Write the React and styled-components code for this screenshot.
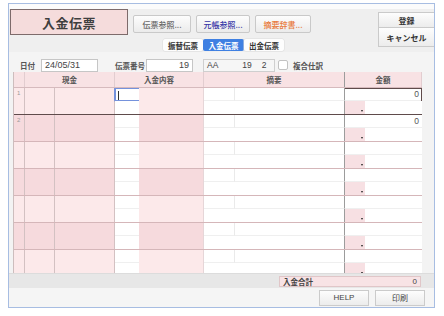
import React from "react";
import styled, { createGlobalStyle } from "styled-components";

const GlobalStyle = createGlobalStyle`
  html, body {
    margin: 0;
    background: #ffffff;
  }
  body {
    font-family: "Liberation Sans", "Noto Sans CJK JP", sans-serif;
    color: #444;
  }
`;

const COLS = "11px 30px 60px 24px 65px 31px 110px 20px 57px";

const Window = styled.div`
  box-sizing: border-box;
  width: 427px;
  height: 305px;
  margin: 3px 0 0 8px;
  border: 1px solid #a7bde2;
  background: #f3f3f3;
  display: flex;
  flex-direction: column;
  overflow: hidden;
`;

const TopStrip = styled.div`
  height: 5px;
  background: #fbfbfb;
`;

const Header = styled.div`
  height: 43px;
  display: flex;
  align-items: flex-start;
  background: #efefef;
`;

const HeaderLeft = styled.div`
  display: flex;
  flex-direction: column;
`;

const TopRow = styled.div`
  display: flex;
  align-items: flex-start;
  padding-left: 1px;
`;

const TitleBox = styled.div`
  box-sizing: border-box;
  width: 118px;
  height: 26px;
  background: #f5dcdc;
  border: 1px solid #7d6b6b;
  display: flex;
  align-items: center;
  justify-content: center;
  font-family: "Noto Sans CJK JP", sans-serif;
  font-weight: 700;
  font-size: 13px;
  color: #3f3f3f;
  letter-spacing: 0.5px;
`;

const ButtonGroup = styled.div`
  display: flex;
  gap: 5px;
  margin: 6px 0 0 5px;
`;

const ToolButton = styled.div`
  box-sizing: border-box;
  width: ${(p) => p.$w}px;
  height: 18px;
  border: 1px solid #c9c9c9;
  border-radius: 2px;
  background: linear-gradient(#fdfdfd, #ebebeb);
  display: flex;
  align-items: center;
  justify-content: center;
  font-family: "Noto Sans CJK JP", sans-serif;
  font-size: 8px;
  font-weight: 500;
  color: ${(p) => p.$color};
`;

const TabsRow = styled.div`
  display: flex;
  margin: 4px 0 0 154px;
`;

const Tab = styled.div`
  box-sizing: border-box;
  width: ${(p) => p.$w}px;
  height: 12px;
  display: flex;
  align-items: center;
  justify-content: center;
  font-family: "Noto Sans CJK JP", sans-serif;
  font-weight: 700;
  font-size: 7.5px;
  background: ${(p) => (p.$active ? "#3f80e2" : "#fdfdfd")};
  color: ${(p) => (p.$active ? "#ffffff" : "#333")};
  border-radius: 2px;
  box-shadow: ${(p) => (p.$active ? "none" : "0 0 0 0.5px #dcdcdc")};
`;

const SideButtons = styled.div`
  margin: 3px 0 0 auto;
  display: flex;
  flex-direction: column;
`;

const SideButton = styled.div`
  box-sizing: border-box;
  width: 56px;
  height: ${(p) => p.$h}px;
  border: 1px solid #cacaca;
  border-right: none;
  background: linear-gradient(#fdfdfd, #ececec);
  display: flex;
  align-items: center;
  justify-content: center;
  font-family: "Noto Sans CJK JP", sans-serif;
  font-weight: 700;
  font-size: 8px;
  color: #333;
  & + & {
    border-top: none;
  }
`;

const InfoRow = styled.div`
  box-sizing: border-box;
  height: 20px;
  padding: 6px 0 0 11px;
  display: flex;
  align-items: center;
  background: #f4f4f4;
`;

const Label = styled.span`
  font-family: "Noto Sans CJK JP", sans-serif;
  font-size: 7.5px;
  font-weight: 700;
  color: #555;
  margin-left: ${(p) => p.$ml || 0}px;
`;

const Field = styled.div`
  box-sizing: border-box;
  width: ${(p) => p.$w}px;
  height: 13px;
  margin-left: ${(p) => p.$ml || 0}px;
  background: #ffffff;
  border: 1px solid #c6c6c6;
  display: flex;
  align-items: center;
  justify-content: ${(p) => (p.$right ? "flex-end" : "flex-start")};
  padding: 0 3px;
  font-size: 9px;
  color: #444;
`;

const CodeBox = styled.div`
  box-sizing: border-box;
  width: 72px;
  height: 13px;
  margin-left: 10px;
  border: 1px solid #cfcfcf;
  background: #f6f6f6;
  display: flex;
  align-items: center;
  padding-left: 3px;
  font-size: 8.5px;
  color: #444;
`;

const CodePart = styled.span`
  margin-left: ${(p) => p.$ml}px;
`;

const CheckBox = styled.div`
  box-sizing: border-box;
  width: 10px;
  height: 10px;
  margin-left: 3px;
  background: #fff;
  border: 1px solid #c2c2c2;
  border-radius: 2px;
`;

const GridFrame = styled.div`
  box-sizing: border-box;
  width: 409px;
  margin-left: 4px;
  border-left: 1px solid #cdbdbd;
  background: #fff;
`;

const HeadRow = styled.div`
  display: grid;
  grid-template-columns: ${COLS};
  height: 16px;
  box-sizing: border-box;
  background: #f8e2e4;
  border-bottom: 1px solid #d6babd;
`;

const HeadCell = styled.div`
  grid-column: span ${(p) => p.$span};
  display: flex;
  align-items: center;
  justify-content: center;
  font-family: "Noto Sans CJK JP", sans-serif;
  font-size: 7.5px;
  font-weight: 700;
  color: #555;
  border-right: 1px solid ${(p) => (p.$dark ? "#9c9c9c" : "#e2cdd0")};
`;

const Body = styled.div`
  height: 185px;
  overflow: hidden;
`;

const Row = styled.div`
  position: relative;
  box-sizing: border-box;
  height: 27px;
  display: grid;
  grid-template-columns: ${COLS};
  grid-template-rows: 13px 13px;
  border-bottom: 1px solid #d5b6b9;
  --pink: ${(p) => (p.$even ? "#f6dadd" : "#fce9ea")};
  outline: ${(p) => (p.$selected ? "1px solid #5f4b4b" : "none")};
  outline-offset: -1px;
`;

const PinkCell = styled.div`
  position: relative;
  grid-column: ${(p) => p.$col};
  grid-row: 1 / span 2;
  background: var(--pink);
  border-right: 1px solid ${(p) => p.$line || "#d3c1c2"};
`;

const RowNum = styled.span`
  position: absolute;
  top: 2px;
  left: 3px;
  font-size: 6px;
  color: #9a9a9a;
`;

const WhiteCell = styled.div`
  position: relative;
  box-sizing: border-box;
  grid-column: ${(p) => p.$col};
  grid-row: ${(p) => p.$row};
  background: #ffffff;
  border-bottom: ${(p) => (p.$row === 1 ? "1px solid #efefef" : "none")};
  border-right: ${(p) => (p.$line ? `1px solid ${p.$line}` : "none")};
`;

const FocusBox = styled.div`
  position: absolute;
  top: -1px;
  left: -1px;
  right: -2px;
  bottom: -2px;
  border: 2px solid #7592dc;
  border-radius: 2px;
  background: #fff;
  &::after {
    content: "";
    position: absolute;
    left: 2px;
    top: 2px;
    width: 1px;
    height: 9px;
    background: #333;
  }
`;

const Amount = styled.div`
  grid-column: 8 / span 2;
  grid-row: 1;
  background: #fff;
  border-bottom: 1px solid #efefef;
  display: flex;
  align-items: center;
  justify-content: flex-end;
  padding-right: 3px;
  font-size: 8.5px;
  color: #555;
`;

const TaxCell = styled.div`
  position: relative;
  grid-column: 8;
  grid-row: 2;
  background: #f7e0e3;
  &::after {
    content: "";
    position: absolute;
    right: 2px;
    bottom: 2px;
    border-left: 1.5px solid transparent;
    border-right: 1.5px solid transparent;
    border-top: 2px solid #222;
  }
`;

const TotalBand = styled.div`
  box-sizing: border-box;
  height: 15px;
  display: flex;
  align-items: center;
  justify-content: flex-end;
  padding-right: 13px;
  background: #e7e7e7;
  border-top: 1px solid #dcdcdc;
`;

const TotalBox = styled.div`
  box-sizing: border-box;
  width: 142px;
  height: 11px;
  background: #f8e3e5;
  border: 1px solid #e0c6c8;
  display: flex;
  align-items: center;
  justify-content: space-between;
  padding: 0 3px;
  font-size: 8px;
  color: #444;
`;

const TotalLabel = styled.span`
  font-family: "Noto Sans CJK JP", sans-serif;
  font-weight: 700;
  font-size: 7.5px;
`;

const Footer = styled.div`
  height: 19px;
  display: flex;
  align-items: center;
  justify-content: flex-end;
  gap: 6px;
  padding-right: 9px;
  background: #f5f5f5;
`;

const FooterButton = styled.div`
  box-sizing: border-box;
  width: 50px;
  height: 16px;
  border: 1px solid #cbcbcb;
  background: linear-gradient(#fdfdfd, #ececec);
  display: flex;
  align-items: center;
  justify-content: center;
  font-family: "Liberation Sans", "Noto Sans CJK JP", sans-serif;
  font-size: 8px;
  color: #444;
`;

const rows = [1, 2, 3, 4, 5, 6, 7];

function EntryRow({ n }) {
  const even = n % 2 === 0;
  return (
    <Row $even={even} $selected={n === 1}>
      <PinkCell $col={1}>{n <= 2 && <RowNum>{n}</RowNum>}</PinkCell>
      <PinkCell $col={2} />
      <PinkCell $col={3} />
      <WhiteCell $col={4} $row={1}>
        {n === 1 && <FocusBox />}
      </WhiteCell>
      <WhiteCell $col={4} $row={2} />
      <PinkCell $col={5} $line="#e6d6d8" />
      <WhiteCell $col={6} $row={1} $line="#eaeaea" />
      <WhiteCell $col={7} $row={1} $line="#9c9c9c" />
      <WhiteCell $col="6 / span 2" $row={2} $line="#9c9c9c" />
      <Amount>{n <= 2 ? "0" : ""}</Amount>
      <TaxCell />
      <WhiteCell $col={9} $row={2} />
    </Row>
  );
}

export default function App() {
  return (
    <>
      <GlobalStyle />
      <Window>
        <TopStrip />
        <Header>
          <HeaderLeft>
            <TopRow>
              <TitleBox>入金伝票</TitleBox>
              <ButtonGroup>
                <ToolButton $w={58} $color="#666">伝票参照...</ToolButton>
                <ToolButton $w={54} $color="#3535a6">元帳参照...</ToolButton>
                <ToolButton $w={56} $color="#e8793a">摘要辞書...</ToolButton>
              </ButtonGroup>
            </TopRow>
            <TabsRow>
              <Tab $w={40}>振替伝票</Tab>
              <Tab $w={41} $active>入金伝票</Tab>
              <Tab $w={40}>出金伝票</Tab>
            </TabsRow>
          </HeaderLeft>
          <SideButtons>
            <SideButton $h={16}>登録</SideButton>
            <SideButton $h={19}>キャンセル</SideButton>
          </SideButtons>
        </Header>

        <InfoRow>
          <Label>日付</Label>
          <Field $w={57} $ml={6}>24/05/31</Field>
          <Label $ml={17}>伝票番号</Label>
          <Field $w={47} $ml={1} $right>19</Field>
          <CodeBox>
            AA
            <CodePart $ml={24}>19</CodePart>
            <CodePart $ml={10}>2</CodePart>
          </CodeBox>
          <CheckBox />
          <Label $ml={5}>複合仕訳</Label>
        </InfoRow>

        <GridFrame>
          <HeadRow>
            <HeadCell $span={1} />
            <HeadCell $span={2}>現金</HeadCell>
            <HeadCell $span={2}>入金内容</HeadCell>
            <HeadCell $span={2} $dark>摘要</HeadCell>
            <HeadCell $span={2}>金額</HeadCell>
          </HeadRow>
          <Body>
            {rows.map((n) => (
              <EntryRow key={n} n={n} />
            ))}
          </Body>
        </GridFrame>

        <TotalBand>
          <TotalBox>
            <TotalLabel>入金合計</TotalLabel>
            <span>0</span>
          </TotalBox>
        </TotalBand>

        <Footer>
          <FooterButton>HELP</FooterButton>
          <FooterButton>印刷</FooterButton>
        </Footer>
      </Window>
    </>
  );
}
